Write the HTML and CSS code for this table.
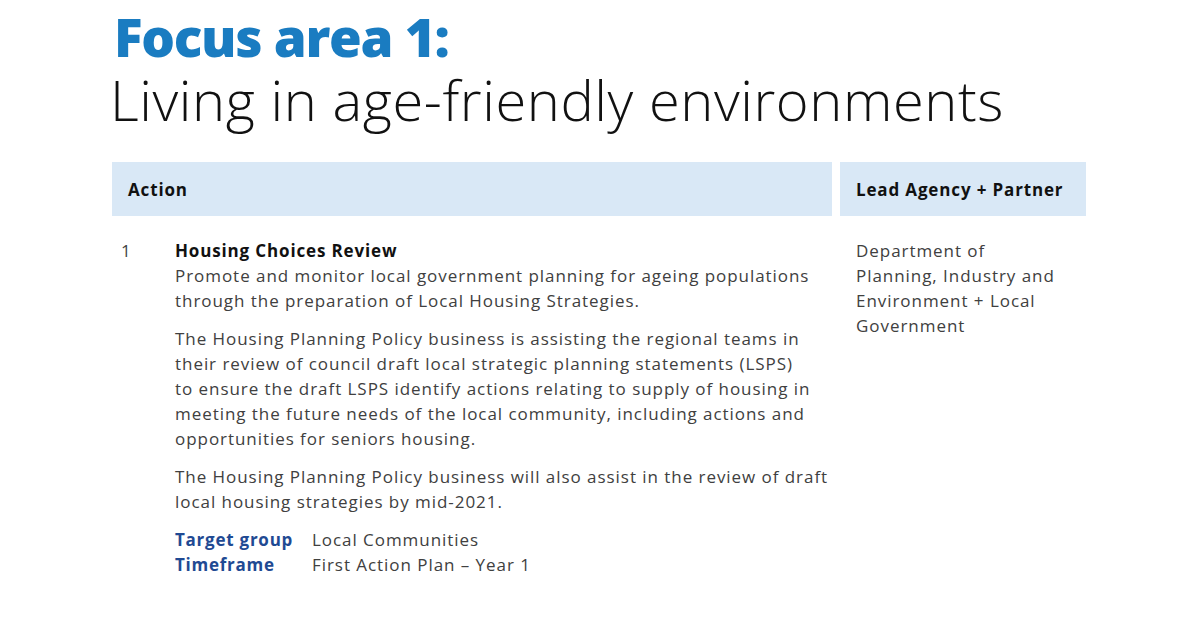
FILE: index.html
```html
<!DOCTYPE html>
<html lang="en">
<head>
<meta charset="utf-8">
<title>Focus area 1</title>
<link rel="stylesheet" href="styles.css">
</head>
<body>
<main class="page">
  <h1 class="title">
    <span class="title-main">Focus area 1:</span>
    <span class="title-sub">Living in age-friendly environments</span>
  </h1>
  <div class="table">
    <div class="head head-action">Action</div>
    <div class="head head-lead">Lead Agency + Partner</div>
    <div class="cell cell-action">
      <div class="num">1</div>
      <div class="content">
        <h2 class="item-title">Housing Choices Review</h2>
        <p>Promote and monitor local government planning for ageing populations through the preparation of Local Housing Strategies.</p>
        <p>The Housing Planning Policy business is assisting the regional teams in their review of council draft local strategic planning statements (LSPS)<br>to ensure the draft LSPS identify actions relating to supply of housing in meeting the future needs of the local community, including actions and opportunities for seniors housing.</p>
        <p>The Housing Planning Policy business will also assist in the review of draft local housing strategies by mid-2021.</p>
        <dl class="meta">
          <dt>Target group</dt><dd>Local Communities</dd>
          <dt>Timeframe</dt><dd>First Action Plan – Year 1</dd>
        </dl>
      </div>
    </div>
    <div class="cell cell-lead">Department of Planning, Industry and Environment + Local Government</div>
  </div>
</main>
</body>
</html>
```

FILE: styles.css
```css
html, body {
  margin: 0;
  padding: 0;
  background: #ffffff;
}
body {
  font-family: "Open Sans", "Liberation Sans", sans-serif;
  color: #404040;
}
.page {
  width: 1200px;
  height: 628px;
  box-sizing: border-box;
  padding: 6px 0 0 112px;
  overflow: hidden;
}
.title {
  margin: 0;
  font-weight: normal;
  display: flex;
  flex-direction: column;
}
.title-main {
  font-family: "Open Sans", sans-serif;
  font-weight: 800;
  font-size: 53px;
  line-height: 62px;
  color: #1a7cc1;
  letter-spacing: -1.3px;
  margin-left: 2px;
}
.title-sub {
  font-family: "Open Sans", sans-serif;
  font-weight: 300;
  font-size: 56px;
  line-height: 62px;
  color: #111111;
  letter-spacing: 0.58px;
  margin-left: -2px;
}
.table {
  margin-top: 32px;
  display: grid;
  grid-template-columns: 720px 246px;
  column-gap: 8px;
}
.head {
  background: #d9e8f6;
  height: 54px;
  display: flex;
  align-items: center;
  padding-left: 16px;
  font-weight: 700;
  font-size: 17px;
  letter-spacing: 0.85px;
  color: #111111;
}
.cell {
  padding-top: 22px;
  font-size: 17px;
  line-height: 25px;
  letter-spacing: 0.95px;
}
.cell-action {
  display: flex;
}
.num {
  width: 63px;
  padding-left: 9px;
  box-sizing: border-box;
  color: #444;
}
.content {
  flex: 1;
  padding-right: 2px;
}
.item-title {
  margin: 0;
  font-size: 17px;
  line-height: 25px;
  font-weight: 700;
  letter-spacing: 0.85px;
  color: #111111;
}
.content p {
  margin: 0 0 13px;
}
.meta {
  margin: 0;
  display: grid;
  grid-template-columns: 137px auto;
}
.meta dt {
  font-weight: 700;
  letter-spacing: 0.75px;
  color: #1f4a93;
}
.meta dd {
  margin: 0;
}
.cell-lead {
  padding-left: 16px;
  padding-right: 20px;
}
```
